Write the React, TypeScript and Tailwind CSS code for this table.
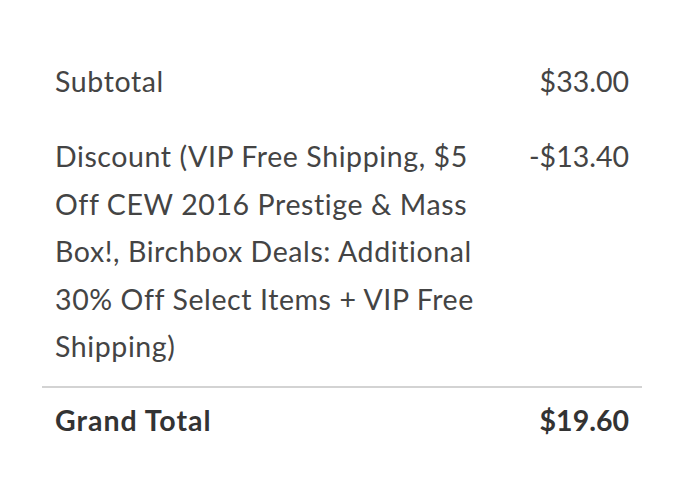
const discountLines = [
  "Discount (VIP Free Shipping, $5",
  "Off CEW 2016 Prestige & Mass",
  "Box!, Birchbox Deals: Additional",
  "30% Off Select Items + VIP Free",
  "Shipping)",
];

export default function App() {
  return (
    <div className="w-[684px] h-[478px] bg-white px-[42px] pt-[58px] text-[#444] [font-family:Lato,'Liberation_Sans',sans-serif] text-[28.5px] leading-[47.5px]">
      <div className="flex justify-between px-[13px]">
        <span className="tracking-[0.6px]">Subtotal</span>
        <span>$33.00</span>
      </div>
      <div className="flex justify-between px-[13px] pt-[27.5px] pb-[15px] border-b-2 border-[#d3d3d3]">
        <div className="tracking-[0.6px]">
          {discountLines.map((line) => (
            <div key={line}>{line}</div>
          ))}
        </div>
        <span>-$13.40</span>
      </div>
      <div className="flex justify-between px-[13px] pt-[9px] font-bold text-[#333]">
        <span className="tracking-[1px]">Grand Total</span>
        <span>$19.60</span>
      </div>
    </div>
  );
}
